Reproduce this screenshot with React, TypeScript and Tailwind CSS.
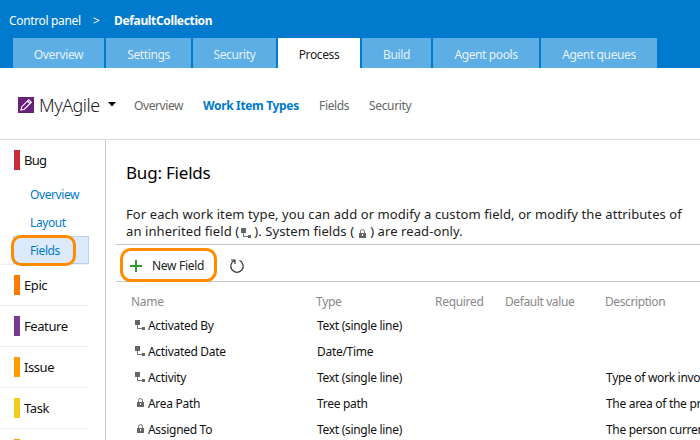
import React from "react";

const tabs = [
  { label: "Overview", box: "w-[91px]" },
  { label: "Settings", box: "w-[85px]" },
  { label: "Security", box: "w-[83px]" },
  { label: "Process", box: "w-[82px]", active: true },
  { label: "Build", box: "w-[69px]" },
  { label: "Agent pools", box: "w-[106px]" },
  { label: "Agent queues", box: "w-[116px]" },
];

const types = [
  { label: "Epic", color: "bg-[#ff7b00]" },
  { label: "Feature", color: "bg-[#773b93]" },
  { label: "Issue", color: "bg-[#ff9d00]" },
  { label: "Task", color: "bg-[#f2cb1d]" },
  { label: "", color: "bg-[#ff9d00]" },
];

const rows = [
  { name: "Activated By", type: "Text (single line)", inherited: true, description: "" },
  { name: "Activated Date", type: "Date/Time", inherited: true, description: "" },
  { name: "Activity", type: "Text (single line)", inherited: true, description: "Type of work invo" },
  { name: "Area Path", type: "Tree path", inherited: false, description: "The area of the pr" },
  { name: "Assigned To", type: "Text (single line)", inherited: false, description: "The person curren" },
];

function InheritedIcon({ className = "" }: { className?: string }) {
  return (
    <svg width="10" height="10" viewBox="0 0 10 10" shapeRendering="crispEdges" className={className}>
      <path d="M0 0h5v5H0z M7 7h3v3H7z" fill="#666" />
      <path d="M2 5h1v3h4v1H2z" fill="#777" />
    </svg>
  );
}

function LockIcon({ className = "" }: { className?: string }) {
  return (
    <svg width="7" height="9" viewBox="0 0 7 9" className={className}>
      <path d="M1.5 4V2.3Q1.5.6 3.5.6T5.500 2.300V4" fill="none" stroke="#777" />
      <path d="M0 4h7v5H0z" fill="#666" />
      <path d="M3 5h1v2H3z" fill="#fff" />
    </svg>
  );
}

export default function App() {
  return (
    <div className="flex h-[440px] w-[700px] flex-col overflow-hidden bg-white font-['Noto_Sans','Open_Sans',sans-serif] text-[12px] leading-4 whitespace-nowrap text-[#111]">
      <header className="flex h-[68px] shrink-0 flex-col justify-between bg-[#007acd]">
        <div className="flex pt-[13px] pl-[9px] text-white">
          <span className="w-[84px] tracking-[-0.35px]">Control panel</span>
          <span className="w-[21px]">&gt;</span>
          <b className="tracking-[-0.35px]">DefaultCollection</b>
        </div>
        <nav className="flex gap-[2px] pl-[13px] tracking-[-0.38px]">
          {tabs.map((t) => (
            <div
              key={t.label}
              className={`flex h-[30px] items-center justify-center pt-[4px] ${t.box} ${t.active ? "bg-white text-[#222]" : "bg-[#5caee5] text-[#e6f1fa]"}`}
            >
              {t.label}
            </div>
          ))}
        </nav>
      </header>

      <div className="flex h-[72px] shrink-0 items-center border-b border-[#dcdcdc] pt-[2px] pl-[18px]">
        <svg width="16" height="16" viewBox="0 0 16 16">
          <path d="M0 0h16v16H0z" fill="#68217a" />
          <path d="M3 13l.8-3.300 7-7 2.500 2.500-7 7z M9.500 4l2.500 2.500" fill="none" stroke="#fff" strokeWidth="1.100" />
        </svg>
        <span className="ml-[5px] w-[69px] text-[18px] leading-6 font-light tracking-[-0.5px] text-[#222]">MyAgile</span>
        <svg width="8" height="5" viewBox="0 0 8 5">
          <path d="M0 0h8L4 4.500z" fill="#000" />
        </svg>
        <nav className="ml-[18px] flex pt-[2px] text-[#666]">
          <span className="w-[69px] tracking-[-0.4px]">Overview</span>
          <b className="w-[116px] tracking-[-0.34px] text-[#007acc]">Work Item Types</b>
          <span className="w-[50px] tracking-[-0.34px]">Fields</span>
          <span className="tracking-[-0.34px]">Security</span>
        </nav>
      </div>

      <div className="flex min-h-0 flex-1">
        <aside className="w-[106px] shrink-0 border-r border-[#c8c8c8]">
          <div className="flex h-[40px] items-center pl-[14px] text-[13px]">
            <i className="h-5 w-[6px] bg-[#cc293d]" />
            <span className="ml-1 tracking-[-0.7px]">Bug</span>
          </div>
          <div className="mr-4 border-b border-[#eee] tracking-[-0.4px] text-[#007acc]">
            <div className="flex h-7 items-center pt-[2px] pl-[30px]">Overview</div>
            <div className="flex h-7 items-center pt-[2px] pl-[30px]">Layout</div>
            <div className="relative ml-[13px] flex h-7 items-center border border-[#b5d3f5] bg-[#dceafb] pt-px pl-4">
              Fields
              <div className="absolute -top-[2px] -left-[3px] h-[31px] w-[65px] rounded-[10px] border-[3px] border-[#ff8c00]" />
            </div>
          </div>
          {types.map((t, i) => (
            <div key={i} className="mr-4 flex h-[41px] items-center border-b border-[#eee] pl-[14px] text-[13px]">
              <i className={`h-5 w-[6px] ${t.color}`} />
              <span className="ml-1 tracking-[-0.42px]">{t.label}</span>
            </div>
          ))}
        </aside>

        <main className="min-w-0 flex-1 overflow-hidden pl-[10px]">
          <h1 className="h-[64px] pt-[21px] pl-[10px] text-[17px] leading-6 tracking-[-0.2px] text-black">Bug: Fields</h1>
          <div className="h-[40px] pl-[10px] text-[13px] leading-[17px] tracking-[0.09px] text-[#222]">
            <p className="pt-[2px]">For each work item type, you can add or modify a custom field, or modify the attributes of</p>
            <p className="flex">
              <span>an inherited field (</span>
              <InheritedIcon className="mt-[5px] ml-[2px]" />
              <span className="ml-[3px]">). System fields (</span>
              <LockIcon className="mt-[6px] ml-[5px]" />
              <span className="ml-[4px]">) are read-only.</span>
            </p>
          </div>
          <div className="relative flex h-[38px] items-center border-y border-[#c8c8c8] pt-[5px] pl-[14px]">
            <svg width="12" height="12" viewBox="0 0 12 12" shapeRendering="crispEdges">
              <path d="M5 0h2v5h5v2H7v5H5V7H0V5h5z" fill="#339933" />
            </svg>
            <span className="ml-[10px] w-[77px] pt-px tracking-[-0.3px] text-[#222]">New Field</span>
            <svg width="16" height="16" viewBox="0 0 16 16" fill="none" stroke="#333" strokeWidth="1.200">
              <path d="M2 2h4v4 M5.500 2.500A6.200 6.200 0 1 0 10.500 2.500" />
            </svg>
            <div className="absolute top-[3px] left-[4px] h-[34px] w-[97px] rounded-[11px] border-[3px] border-[#ff8c00]" />
          </div>
          <div className="grid h-[30px] grid-cols-[185px_119px_70px_100px_1fr] items-center pt-[9px] pl-[15px] tracking-[-0.3px] text-[#888]">
            <span>Name</span>
            <span>Type</span>
            <span>Required</span>
            <span className="tracking-[-0.4px]">Default value</span>
            <span className="tracking-[-0.4px]">Description</span>
          </div>
          {rows.map((r) => (
            <div key={r.name} className="grid h-[26px] grid-cols-[168px_289px_1fr] items-center pt-px pl-[33px] tracking-[-0.3px]">
              <div className="-ml-[14px] flex items-center">
                <span className="flex w-[13px]">
                  {r.inherited ? <InheritedIcon className="mb-[2px]" /> : <LockIcon className="mb-[3px] ml-[2px]" />}
                </span>
                <span>{r.name}</span>
              </div>
              <span>{r.type}</span>
              <span>{r.description}</span>
            </div>
          ))}
        </main>
      </div>
    </div>
  );
}
